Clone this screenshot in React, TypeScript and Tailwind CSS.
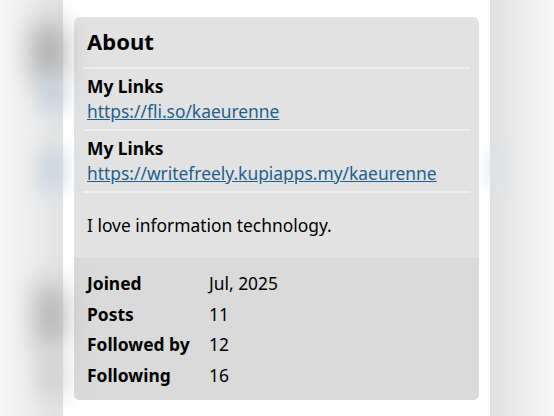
import React from 'react';

const links = [
  'https://fli.so/kaeurenne',
  'https://writefreely.kupiapps.my/kaeurenne',
];

const stats = [
  { label: 'Joined', value: 'Jul, 2025' },
  { label: 'Posts', value: '11' },
  { label: 'Followed by', value: '12' },
  { label: 'Following', value: '16' },
];

export default function App() {
  return (
    <div
      className="flex h-[416px] w-[554px] overflow-hidden bg-[#f4f4f4] text-black"
      style={{ fontFamily: '"Noto Sans", "Open Sans", sans-serif' }}
    >
      {/* blurred page behind, left */}
      <div className="flex w-[63px] shrink-0 flex-col bg-gradient-to-r from-[#f7f7f7] to-[#e2e2e2]">
        <div className="h-[24px]" />
        <div className="ml-[34px] h-[56px] bg-[#a4a4a4] blur-[14px]" />
        <div className="ml-[40px] h-[30px] bg-[#c2d0da] blur-[10px]" />
        <div className="h-[40px]" />
        <div className="ml-[40px] h-[40px] bg-[#c8d5df] blur-[10px]" />
        <div className="h-[96px]" />
        <div className="ml-[38px] h-[60px] bg-[#a8a8a8] blur-[14px]" />
        <div className="ml-[40px] mt-[10px] h-[40px] bg-[#cacaca] blur-[12px]" />
      </div>

      <div className="w-[427px] shrink-0 bg-white px-[11px] pt-[17px]">
        <div className="overflow-hidden rounded-[6px] bg-[#e2e2e2]">
          <div className="px-[9px]">
            <h2 className="px-[4px] pt-[10px] pb-[12px] text-[22px] font-bold leading-[28px]">About</h2>
            {links.map((href) => (
              <div key={href} className="border-t-2 border-[#efefef] px-[4px] py-[5px]">
                <div className="text-[17.4px] font-bold leading-[25px]">My Links</div>
                <a href={href} className="text-[17.4px] leading-[25px] text-[#1e5f8c] underline">
                  {href}
                </a>
              </div>
            ))}
            <p className="border-t-2 border-[#efefef] px-[4px] py-[20px] text-[17.4px] leading-[25px]">
              I love information technology.
            </p>
          </div>
          <div className="bg-[#dadada] px-[13px] py-[10px]">
            {stats.map((s) => (
              <div key={s.label} className="flex text-[17.4px] leading-[30.5px]">
                <div className="w-[122px] font-bold">{s.label}</div>
                <div>{s.value}</div>
              </div>
            ))}
          </div>
        </div>
      </div>

      {/* blurred page behind, right */}
      <div className="flex flex-1 flex-col bg-gradient-to-r from-[#e0e0e0] to-[#f8f8f8]">
        <div className="h-[150px]" />
        <div className="mr-[50px] h-[40px] bg-[#dde3e8] blur-[8px]" />
      </div>
    </div>
  );
}
